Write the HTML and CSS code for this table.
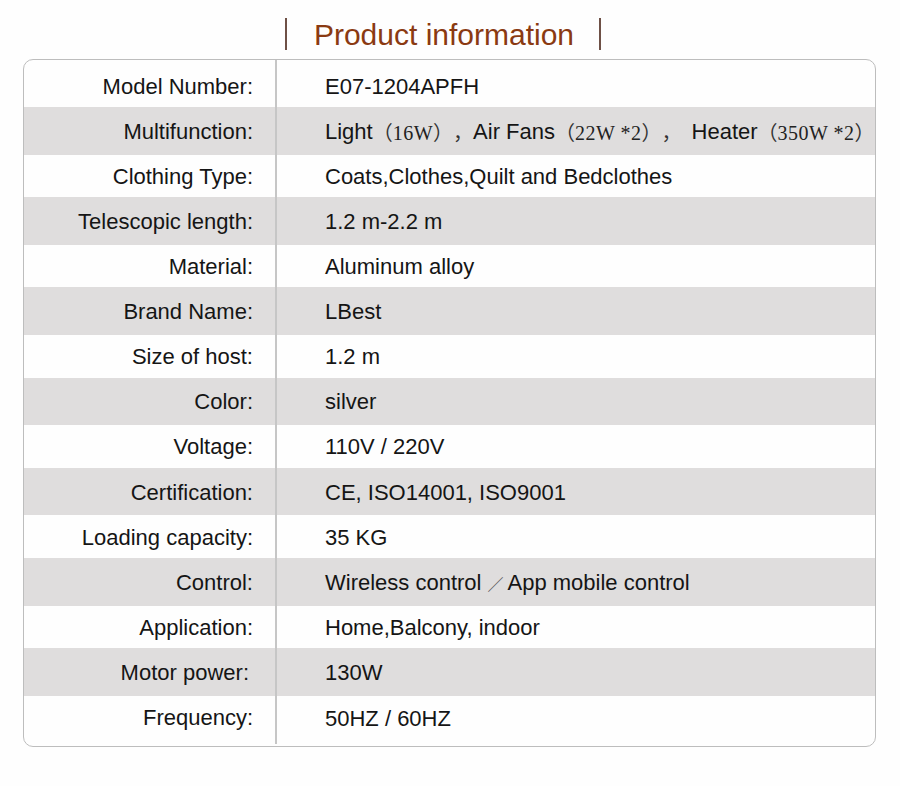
FILE: index.html
```html
<!DOCTYPE html>
<html>
<head>
<meta charset="utf-8">
<link rel="stylesheet" href="styles.css">
</head>
<body>
<div class="heading">
  <h1 class="heading-text">Product information</h1>
</div>
<div class="spec">
  <div class="row first"><div class="label">Model Number:</div><div class="value">E07-1204APFH</div></div>
  <div class="row gray"><div class="label">Multifunction:</div><div class="value">Light<span class="cjk">（<span class="num">16W</span>），</span>Air Fans <span class="cjk gap-b">（<span class="num">22W *2</span>），</span>Heater<span class="cjk">（<span class="num">350W *2</span>）</span></div></div>
  <div class="row white"><div class="label">Clothing Type:</div><div class="value">Coats,Clothes,Quilt and Bedclothes</div></div>
  <div class="row gray"><div class="label">Telescopic length:</div><div class="value">1.2 m-2.2 m</div></div>
  <div class="row white"><div class="label">Material:</div><div class="value">Aluminum alloy</div></div>
  <div class="row gray"><div class="label">Brand Name:</div><div class="value">LBest</div></div>
  <div class="row white"><div class="label">Size of host:</div><div class="value">1.2 m</div></div>
  <div class="row gray"><div class="label">Color:</div><div class="value">silver</div></div>
  <div class="row white"><div class="label">Voltage:</div><div class="value">110V / 220V</div></div>
  <div class="row gray"><div class="label">Certification:</div><div class="value">CE, ISO14001, ISO9001</div></div>
  <div class="row white"><div class="label">Loading capacity:</div><div class="value">35 KG</div></div>
  <div class="row gray"><div class="label">Control:</div><div class="value">Wireless control<span class="cjk slash">／</span>App mobile control</div></div>
  <div class="row white"><div class="label">Application:</div><div class="value">Home,Balcony, indoor</div></div>
  <div class="row gray"><div class="label narrow">Motor power:</div><div class="value">130W</div></div>
  <div class="row last"><div class="label">Frequency:</div><div class="value">50HZ / 60HZ</div></div>
</div>
</body>
</html>
```

FILE: styles.css
```css
html, body {
  margin: 0;
  padding: 0;
  background: #fefefe;
}

body {
  font-family: "Liberation Sans", Arial, sans-serif;
  color: #151515;
}

.heading {
  display: flex;
  justify-content: center;
  padding-top: 18px;
  height: 41px;
}

.heading-text {
  margin: 0 14px 0 0;
  height: 32px;
  line-height: 34px;
  font-size: 30px;
  font-weight: normal;
  color: #8a3a12;
  border-left: 2px solid #6e5046;
  border-right: 2px solid #6e5046;
  padding: 0 25px 0 27px;
}

.spec {
  box-sizing: border-box;
  width: 853px;
  margin-left: 23px;
  border: 1px solid #bdbdbd;
  border-radius: 10px;
  overflow: hidden;
}

.row {
  display: grid;
  grid-template-columns: 253px 1fr;
  font-size: 22px;
}

.row.first { height: 47px; }
.row.gray { height: 47.6px; background: #dfdddd; }
.row.white { height: 42.6px; }
.row.last { height: 50px; }

.label,
.value {
  display: flex;
  align-items: center;
  white-space: nowrap;
  padding-top: 2px;
  text-spacing-trim: space-all;
}

.row.first .label,
.row.first .value {
  padding-top: 7px;
}

.row.last .label,
.row.last .value {
  padding-top: 0;
  padding-bottom: 4px;
}

.label {
  justify-content: flex-end;
  padding-right: 22px;
  border-right: 2px solid #c6c6c6;
}

.label.narrow {
  padding-right: 26px;
}

.row.last .label {
  margin-bottom: 2px;
}

.value {
  padding-left: 48px;
}

.cjk {
  font-family: "Noto Sans CJK SC", sans-serif;
  font-size: 20px;
  color: #333;
  text-spacing-trim: space-all;
}

.cjk.gap-b {
  margin-right: 10px;
}

.num {
  font-family: "Liberation Serif", serif;
  font-size: 20px;
  letter-spacing: 0.5px;
  color: #222;
}

.slash {
  font-size: 16px;
  color: #555;
  margin: 0 4px 0 6px;
}
```
